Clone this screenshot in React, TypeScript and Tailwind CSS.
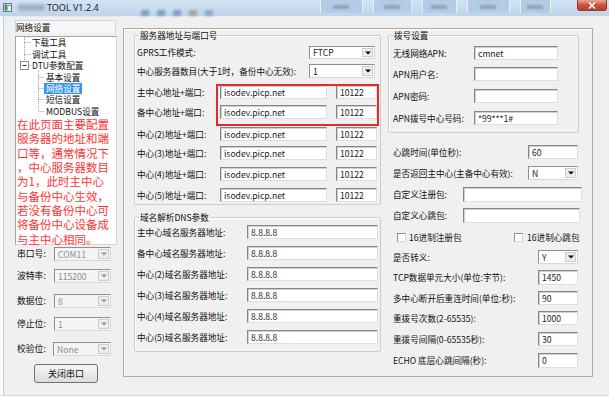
import React from "react";

type P = { className?: string; children?: React.ReactNode };

const Label = ({ className = "", children }: P) => (
  <div className={`shrink-0 whitespace-nowrap text-[8.6px] leading-none text-[#111] ${className}`}>{children}</div>
);

const Edit = ({ className = "", value = "" }: { className?: string; value?: string }) => (
  <div
    className={`shrink-0 flex items-center overflow-hidden whitespace-nowrap bg-white border border-[#858585] border-r-[#dedede] border-b-[#dedede] shadow-[inset_1px_1px_0_#d0d0d0] pl-[3px] text-[8.6px] leading-none text-[#1a1a1a] ${className}`}
  >
    {value}
  </div>
);

const Arrow = ({ color }: { color: string }) => (
  <svg width="6" height="4" viewBox="0 0 6 4">
    <path d="M0 0.5h6L3 3.5z" fill={color} />
  </svg>
);

const Combo = ({ className = "", value = "", disabled = false }: { className?: string; value?: string; disabled?: boolean }) => (
  <div
    className={`shrink-0 flex items-stretch border border-[#8e8e8e] border-r-[#d8d8d8] border-b-[#d8d8d8] ${
      disabled ? "bg-[#f4f4f4]" : "bg-white"
    } ${className}`}
  >
    <div className={`flex-1 flex items-center pl-[3px] text-[8.6px] leading-none ${disabled ? "text-[#8e8e8e]" : "text-[#1a1a1a]"}`}>
      {value}
    </div>
    <div className="w-[11px] m-px flex items-center justify-center bg-[#ededed] border border-[#cdcdcd]">
      <Arrow color={disabled ? "#9a9a9a" : "#000"} />
    </div>
  </div>
);

const Group = ({ title, className = "", children }: P & { title: string }) => (
  <div className={`relative shrink-0 border border-[#c8ced3] rounded-[2px] shadow-[inset_1px_1px_0_#ffffff] ${className}`}>
    <span className="absolute left-[4px] top-[-6px] px-[1px] bg-[#f0f0f0] text-[8.6px] leading-[11px] whitespace-nowrap text-[#111]">
      {title}
    </span>
    {children}
  </div>
);

const Check = () => <div className="w-[9px] h-[9px] shrink-0 bg-white border border-[#8f8f8f] border-r-[#d5d5d5] border-b-[#d5d5d5]" />;

const TitleBar = () => (
  <div className="h-[17px] shrink-0 flex items-start bg-linear-to-b from-[#d4e3f3] via-[#c8dbef] to-[#bfd4ea] border-b border-[#e3ebf4]">
    <svg className="mt-[3px] ml-[3px] shrink-0" width="9" height="9" viewBox="0 0 9 9">
      <rect x="0.5" y="0.5" width="8" height="8" fill="#e8eef4" stroke="#6b7785" />
      <rect x="1.5" y="1.5" width="3" height="6" fill="#3c9a5a" />
      <rect x="5" y="2" width="2.5" height="1" fill="#6b7785" />
    </svg>
    <div className="mt-[4px] ml-[6px] w-[27px] h-[7px] rounded-[2px] bg-[#9db1c7] blur-[1.5px]" />
    <div className="mt-[2px] ml-[2px] text-[9px] leading-[11px] text-[#1d1d1d] font-['Noto_Sans',sans-serif] whitespace-nowrap">TOOL V1.2.4</div>
    <div className="ml-[42px] mt-[10px] flex gap-[8px]">
      <div className="w-[8px] h-[6px] bg-[#5f7fa8] opacity-60 blur-[1px]" />
      <div className="w-[8px] h-[6px] bg-[#5f7fa8] opacity-60 blur-[1px]" />
      <div className="w-[8px] h-[6px] bg-[#5f7fa8] opacity-60 blur-[1px]" />
      <div className="w-[8px] h-[6px] bg-[#8a7a50] opacity-50 blur-[1px]" />
      <div className="w-[8px] h-[6px] bg-[#5f7fa8] opacity-50 blur-[1px]" />
    </div>
    <div className="ml-[107px] flex gap-[10px]">
      {[43, 39, 35, 43, 31].map((w, i) => (
        <div key={i} className="h-[13px] flex items-center justify-center bg-[#b3cbe4] border-x border-[#e6eef7] blur-[0.6px]" style={{ width: w }}>
          <div className="w-[16px] h-[4px] bg-[#7f95ad] opacity-70 blur-[1px]" />
        </div>
      ))}
    </div>
    <div className="ml-auto mr-[2px] w-[30px] h-[11px] rounded-b-[3px] border border-t-0 border-[#8c3a30] bg-linear-to-b from-[#e9a597] via-[#d0503d] to-[#c23b2a] flex items-center justify-center">
      <svg width="8" height="7" viewBox="0 0 8 7">
        <path d="M1 0.5L7 6.5M7 0.5L1 6.5" stroke="#fff" strokeWidth="1.7" />
      </svg>
    </div>
  </div>
);

const treeRoot = ["下载工具", "调试工具", "DTU参数配置"];
const treeChild = ["基本设置", "网络设置", "短信设置", "MODBUS设置"];
const redLines = [
  "在此页面主要配置",
  "服务器的地址和端",
  "口等，通常情况下",
  "，中心服务器数目",
  "为1，此时主中心",
  "与备份中心生效，",
  "若没有备份中心可",
  "将备份中心设备成",
  "与主中心相同。",
];

const serial = [
  { label: "串口号:", value: "COM11", mt: "mt-[2px]", lw: "w-[37px]", cw: "w-[57px]" },
  { label: "波特率:", value: "115200", mt: "mt-[8px]", lw: "w-[37px]", cw: "w-[57px]" },
  { label: "数据位:", value: "8", mt: "mt-[11px]", lw: "w-[37px]", cw: "w-[57px]" },
  { label: "停止位:", value: "1", mt: "mt-[9px]", lw: "w-[37px]", cw: "w-[57px]" },
  { label: "校验位:", value: "None", mt: "mt-[11px]", lw: "w-[36px]", cw: "w-[58px]" },
];

const LeftPanel = () => (
  <div className="w-[123px] shrink-0 flex">
    <div className="w-[3px] bg-[#f7f9fb]" />
    <div className="w-px bg-[#c6ccd2]" />
    <div className="flex flex-col pl-[11px]">
      <div className="mt-[3px] w-[101px] h-[13px] border border-b-0 border-[#d5d5d5] bg-[#f6f6f6] flex items-center text-[8.6px] leading-none text-[#111]">
        网络设置
      </div>
      <div className="relative mt-[3px] w-[102px] h-[209px] bg-white border border-[#a5a5a5] border-r-[#d6d6d6] border-b-[#d6d6d6]">
        <svg className="absolute left-0 top-0" width="40" height="80" viewBox="0 0 40 80">
          <g stroke="#9d9d9d" strokeDasharray="1 1" fill="none">
            <path d="M8.5 0V24" />
            <path d="M8.5 5.5H15" />
            <path d="M8.5 17.5H15" />
            <path d="M12.5 28.5H15" />
            <path d="M22.5 34V74" />
            <path d="M22.5 40.5H28" />
            <path d="M22.5 51.5H28" />
            <path d="M22.5 62.5H28" />
            <path d="M22.5 74.5H28" />
          </g>
          <rect x="4.5" y="24.5" width="8" height="8" fill="#fff" stroke="#8c8c8c" />
          <path d="M6.5 28.5H10.5" stroke="#333" />
        </svg>
        {treeRoot.map((t) => (
          <div key={t} className="h-[11.4px] flex items-center pl-[16px] text-[8.6px] leading-none text-[#111] whitespace-nowrap">
            {t}
          </div>
        ))}
        {treeChild.map((t) => (
          <div key={t} className="h-[11.4px] flex items-center pl-[28px] text-[8.6px] leading-none whitespace-nowrap">
            <span className={`px-[2px] h-[11px] flex items-center ${t === "网络设置" ? "bg-[#3393f0] text-white" : "text-[#111]"}`}>{t}</span>
          </div>
        ))}
        <div className="pl-[1px] text-[11.5px] leading-[14.4px] text-[#ff3434] whitespace-nowrap">
          {redLines.map((l) => (
            <div key={l} className="h-[14.4px]">
              {l}
            </div>
          ))}
        </div>
      </div>
      {serial.map((s) => (
        <div key={s.label} className={`flex items-center h-[14px] pl-[2px] ${s.mt}`}>
          <Label className={`${s.lw} text-[8.8px]`}>{s.label}</Label>
          <Combo disabled value={s.value} className={`${s.cw} h-[14px]`} />
        </div>
      ))}
      <div className="mt-[8px] ml-[19px] w-[64px] h-[19px] rounded-[3px] border border-[#707070] bg-linear-to-b from-[#f7f7f7] to-[#dcdcdc] flex items-center justify-center text-[9px] leading-none text-[#111]">
        关闭串口
      </div>
    </div>
  </div>
);

const addrRows = [
  { label: "主中心地址+端口:", mt: "mt-[7px]" },
  { label: "备中心地址+端口:", mt: "mt-[6px]" },
  { label: "中心(2)地址+端口:", mt: "mt-[8px]" },
  { label: "中心(3)地址+端口:", mt: "mt-[5px]" },
  { label: "中心(4)地址+端口:", mt: "mt-[7px]" },
  { label: "中心(5)地址+端口:", mt: "mt-[7px]" },
];

const dnsRows = ["主中心域名服务器地址:", "备中心域名服务器地址:", "中心(2)域名服务器地址:", "中心(3)域名服务器地址:", "中心(4)域名服务器地址:", "中心(5)域名服务器地址:"];

const dialRows = [
  { label: "无线网络APN:", value: "cmnet", mt: "mt-[10px]" },
  { label: "APN用户名:", value: "", mt: "mt-[7px]" },
  { label: "APN密码:", value: "", mt: "mt-[8px]" },
  { label: "APN拨号中心号码:", value: "*99***1#", mt: "mt-[8px]" },
];

const lowerRows = [
  { label: "TCP数据单元大小(单位:字节):", value: "1450", mt: "mt-[6px]", h: "h-[15px]" },
  { label: "多中心断开后重连时间(单位:秒):", value: "90", mt: "mt-[6px]", h: "h-[14px]" },
  { label: "重拨号次数(2-65535):", value: "1000", mt: "mt-[6px]", h: "h-[14px]" },
  { label: "重拨号间隔(0-65535秒):", value: "30", mt: "mt-[7px]", h: "h-[14px]" },
  { label: "ECHO 底层心跳间隔(秒):", value: "0", mt: "mt-[7px]", h: "h-[15px]" },
];

const Frame = () => (
  <div className="mt-[11px] w-[470px] h-[349px] shrink-0 border border-[#aaaaaa] shadow-[inset_1px_1px_0_#fff] flex pl-[10px] pt-[6px]">
    <div className="w-[247px] shrink-0 flex flex-col">
      <Group title="服务器地址与端口号" className="w-[247px] h-[170px] flex flex-col pl-[2px]">
        <div className="absolute left-[81px] top-[48px] w-[163px] h-[42px] border-2 border-[#e42a2a]" />
        <div className="flex items-center mt-[10px] h-[13px]">
          <Label className="w-[172px]">GPRS工作模式:</Label>
          <Combo value="FTCP" className="w-[66px] h-[13px]" />
        </div>
        <div className="flex items-center mt-[5px] h-[14px]">
          <Label className="w-[172px]">中心服务器数目(大于1时，备份中心无效):</Label>
          <Combo value="1" className="w-[66px] h-[14px]" />
        </div>
        {addrRows.map((r) => (
          <div key={r.label} className={`flex items-center h-[14px] ${r.mt}`}>
            <Label className="w-[83px]">{r.label}</Label>
            <Edit value="isodev.picp.net" className="w-[107px] h-[14px]" />
            <Edit value="10122" className="ml-[9px] w-[41px] h-[14px]" />
          </div>
        ))}
      </Group>
      <Group title="域名解析DNS参数" className="mt-[12px] w-[247px] h-[135px] flex flex-col gap-[7px] pl-[2px] pt-[7px]">
        {dnsRows.map((l) => (
          <div key={l} className="flex items-center h-[14px]">
            <Label className="w-[110px]">{l}</Label>
            <Edit value="8.8.8.8" className="w-[131px] h-[14px]" />
          </div>
        ))}
      </Group>
    </div>

    <div className="ml-[7px] w-[195px] shrink-0 flex flex-col">
      <Group title="拨号设置" className="w-[191px] h-[98px] flex flex-col pl-[4px]">
        {dialRows.map((r) => (
          <div key={r.label} className={`flex items-center h-[14px] ${r.mt}`}>
            <Label className="w-[81px]">{r.label}</Label>
            <Edit value={r.value} className="w-[84px] h-[14px]" />
          </div>
        ))}
      </Group>
      <div className="flex items-center h-[14px] mt-[12px] pl-[5px]">
        <Label>心跳时间(单位秒):</Label>
        <Edit value="60" className="ml-auto mr-[5px] w-[50px] h-[14px]" />
      </div>
      <div className="flex items-center h-[14px] mt-[7px] pl-[5px]">
        <Label>是否返回主中心(主备中心有效):</Label>
        <Combo value="N" className="ml-auto mr-[5px] w-[50px] h-[14px]" />
      </div>
      <div className="flex items-center h-[15px] mt-[7px] pl-[5px]">
        <Label>自定义注册包:</Label>
        <Edit className="ml-auto mr-[1px] w-[119px] h-[15px]" />
      </div>
      <div className="flex items-center h-[15px] mt-[6px] pl-[5px]">
        <Label>自定义心跳包:</Label>
        <Edit className="ml-auto mr-[3px] w-[117px] h-[15px]" />
      </div>
      <div className="flex items-center h-[12px] mt-[8px] pl-[9px]">
        <div className="w-[117px] flex items-center">
          <Check />
          <Label className="ml-[3px]">16进制注册包</Label>
        </div>
        <div className="flex items-center">
          <Check />
          <Label className="ml-[4px]">16进制心跳包</Label>
        </div>
      </div>
      <div className="flex items-center h-[14px] mt-[7px] pl-[5px]">
        <Label>是否转义:</Label>
        <Combo value="Y" className="ml-auto mr-[5px] w-[40px] h-[14px]" />
      </div>
      {lowerRows.map((r) => (
        <div key={r.label} className={`flex items-center pl-[5px] ${r.h} ${r.mt}`}>
          <Label>{r.label}</Label>
          <Edit value={r.value} className={`ml-auto mr-[5px] w-[40px] ${r.h}`} />
        </div>
      ))}
    </div>
  </div>
);

export default function App() {
  return (
    <div className="w-[609px] h-[397px] overflow-hidden bg-[#f0f0f0] font-['Noto_Sans_CJK_SC',sans-serif] text-[#111] flex flex-col">
      <TitleBar />
      <div className="flex h-[378px] shrink-0">
        <LeftPanel />
        <Frame />
      </div>
      <div className="h-px shrink-0 bg-[#d2d2d2]" />
      <div className="h-px shrink-0 bg-white" />
    </div>
  );
}
